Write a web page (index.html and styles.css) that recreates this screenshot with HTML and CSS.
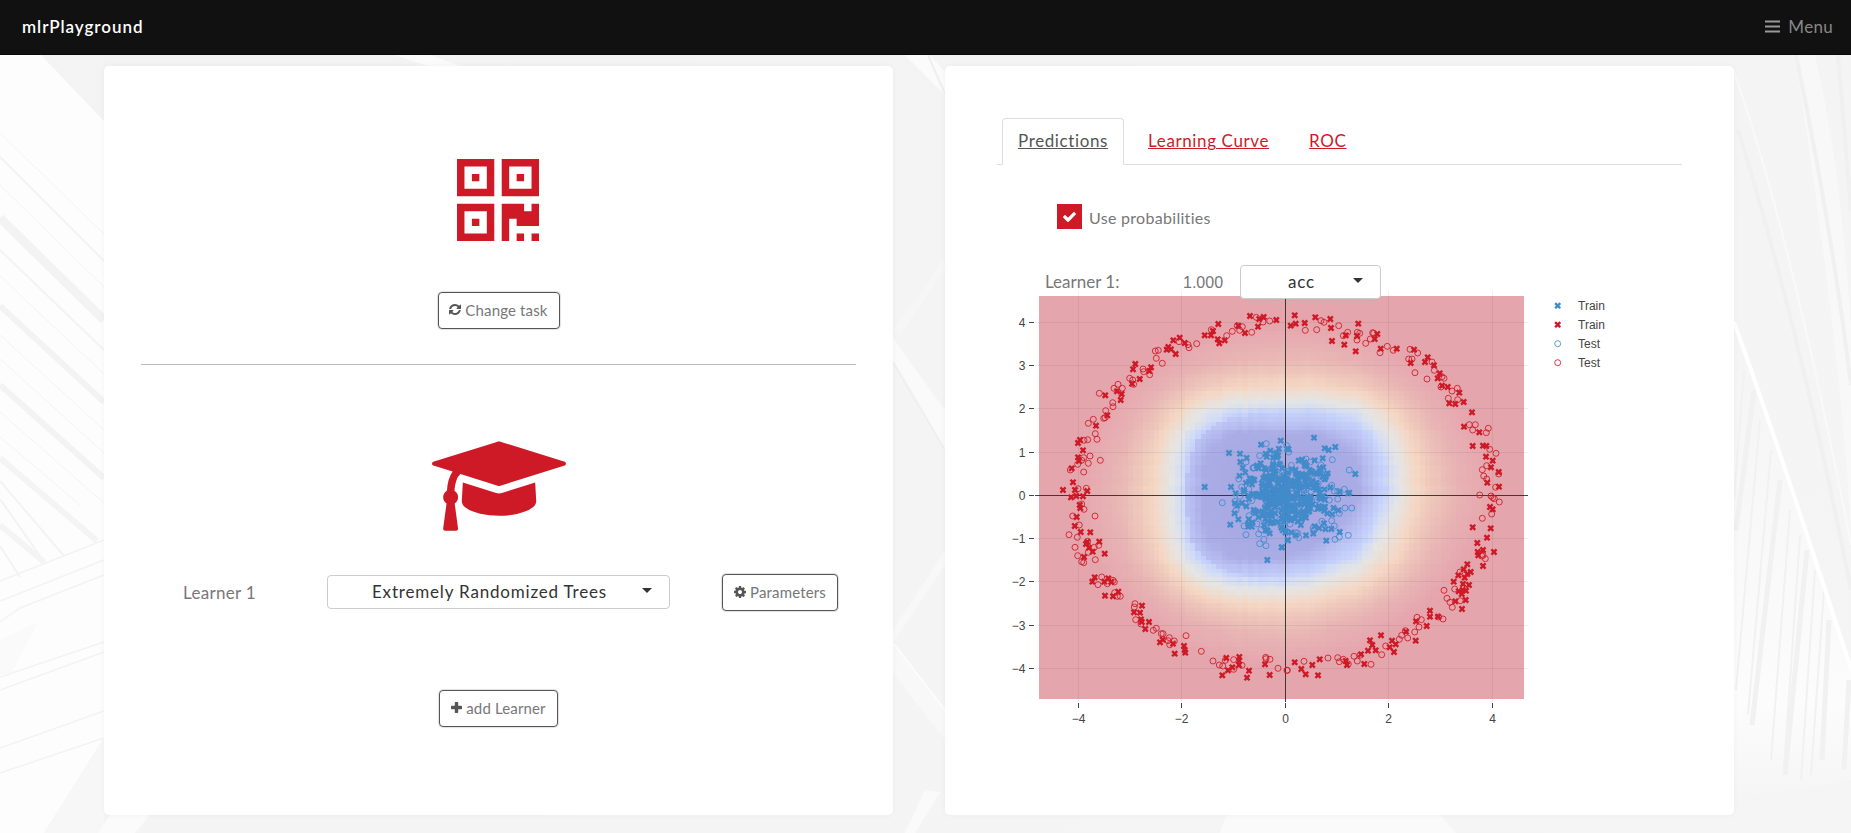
FILE: index.html
```html
<!DOCTYPE html>
<html lang="en">
<head>
<meta charset="utf-8">
<title>mlrPlayground</title>
<link rel="stylesheet" href="styles.css">
</head>
<body>
<svg class="backdrop" viewBox="0 0 1851 833" aria-hidden="true">
  <defs>
    <linearGradient id="wall" x1="0" x2="1" y1="0" y2="1">
      <stop offset="0" stop-color="#f3f3f3"/><stop offset="1" stop-color="#f5f5f5"/>
    </linearGradient>
    <linearGradient id="fade" x1="0" x2="0" y1="0" y2="1">
      <stop offset="0" stop-color="#f4f4f4"/><stop offset=".8" stop-color="#fcfcfc"/><stop offset="1" stop-color="#f5f5f5"/>
    </linearGradient>
  </defs>
  <rect width="1851" height="833" fill="url(#wall)"/>
  <path fill="#fdfdfd" d="M0 55H41L104 121V738L44 833H0Z"/>
  <g stroke="#f3f3f3" fill="none">
    <path stroke-width="1" d="M0 133L104 234M0 185L104 287M0 276L104 374M0 335L104 430M0 359L104 453M0 412L104 503M0 437L80 505"/>
    <path stroke-width="2" d="M0 157L104 261M0 250L104 350M0 481L64 556M0 499L45 563M0 546L20 577"/>
    <path stroke-width="9" d="M0 218L104 320"/>
    <path stroke-width="6" d="M0 306L104 402M0 385L104 478"/>
    <path stroke-width="6" stroke="#f4f4f4" d="M0 458L97 541M0 525L44 562"/>
    <path stroke-width="1.5" d="M0 581L104 540M0 601L104 560M20 608L104 575M0 622L20 608M0 677L104 642M0 690L104 652M0 748L104 711M0 773L104 738"/>
  </g>
  <path fill="#fafafa" d="M0 640L38 622L12 672L0 675Z"/>
  <path fill="#f7f7f7" d="M104 738V833H44Z"/>
  <path fill="#fbfbfb" d="M395 55L428 66H460L430 55ZM98 833L110 815H150L135 833ZM930 55L945 72V95L905 55Z"/>
  <path fill="#f6f6f6" d="M893 330L900 336L945 270V258Z"/>
  <path fill="#fafafa" d="M893 338L945 410V450L893 362Z"/>
  <path stroke="#efefef" stroke-width="2" d="M893 362L945 450M928 55L945 94"/>
  <path fill="#f8f8f8" d="M893 643L945 565V550L893 630ZM893 645L945 710V740L893 673Z"/>
  <path stroke="#fdfdfd" stroke-width="2" d="M893 643L945 710"/>
  <path fill="#fafafa" d="M905 833L925 790L940 792L915 833ZM1220 833L1226 815H1440L1456 833Z"/>
  <path fill="url(#fade)" d="M1734 325L1851 670V780L1734 800Z"/>
  <g stroke="#f1f1f1" fill="none">
    <path stroke-width="2" d="M1734 500L1744 370M1736 690L1760 420M1748 715L1771 450M1771 760L1790 510M1784 770L1800 535M1801 780L1815 570M1811 775L1824 590"/>
    <path stroke-width="5" d="M1736 530L1754 390M1752 725L1780 480M1785 775L1807 550M1822 760L1829 620M1844 770L1849 680"/>
  </g>
  <path fill="none" stroke="#fff" stroke-width="4" d="M1734 322Q1780 450 1852 672"/>
  <path fill="none" stroke="#f9f9f9" stroke-width="2" d="M1734 72Q1790 230 1851 545M1808 55Q1833 190 1851 340"/>
  <path fill="#f8f8f8" d="M1815 55Q1840 160 1851 330V540Q1845 380 1795 55Z"/>
  <path fill="none" stroke="#f0f0f0" stroke-width="4" d="M1738 130Q1800 330 1851 590M1796 55Q1832 230 1851 385M1838 55L1851 210"/>
</svg>

<header class="navbar">
  <span class="brand">mlrPlayground</span>
  <a class="menu"><svg viewBox="0 0 15 13"><path d="M0 0.5h15v2H0zM0 5.5h15v2H0zM0 10.5h15v2H0z"/></svg><span>Menu</span></a>
</header>

<main class="board">
  <section class="card setup">
    <svg class="qr" viewBox="0 0 11 11"><path fill-rule="evenodd" d="M0 0h5v5H0zM1 1v3h3V1zM2 2h1v1H2zM6 0h5v5H6zM7 1v3h3V1zM8 2h1v1H8zM0 6h5v5H0zM1 7v3h3V7zM2 8h1v1H2zM6 6h3v1h1V6h1v3H8V8H7v3H6zM8 10h1v1H8zM10 10h1v1h-1z"/></svg>
    <button class="btn btn-task"><svg viewBox="0 128 1536 1536"><path d="M1511 928q0 5-1 7-64 268-268 434.500t-478 166.500q-146 0-282.500-55t-243.500-157l-129 129q-19 19-45 19t-45-19-19-45v-448q0-26 19-45t45-19h448q26 0 45 19t19 45-19 45l-137 137q71 66 161 102t187 36q134 0 250-65t186-179q11-17 53-117 8-23 30-23h192q13 0 22.500 9.500t9.500 22.500zm25-672v448q0 26-19 45t-45 19h-448q-26 0-45-19t-19-45 19-45l138-138q-148-137-349-137-134 0-250 65t-186 179q-11 17-53 117-8 23-30 23h-199q-13 0-22.500-9.500t-9.500-22.500v-7q65-268 270-434.500t480-166.500q146 0 284 55.500t245 156.500l130-129q19-19 45-19t45 19 19 45z"/></svg><span>Change task</span></button>
    <hr class="divider">
    <svg class="cap" viewBox="0 128 2304 1536"><path d="M1774 836l18 316q4 69-82 128t-235 93.500t-323 34.500t-323-34.500t-235-93.500t-82-128l18-316l574 181q22 7 48 7t48-7zM2304 512q0 23-22 31l-1120 352q-4 1-10 1t-10-1l-652-206q-43 34-71 111.500t-34 178.500q63 36 63 109q0 69-58 107l58 433q2 14-8 25q-9 11-24 11h-192q-15 0-24-11q-10-11-8-25l58-433q-58-38-58-107q0-73 65-111q11-207 98-330l-333-104q-22-8-22-31t22-31l1120-352q4-1 10-1t10 1l1120 352q22 8 22 31z"/></svg>
    <div class="learner-row">
      <span class="learner-name">Learner 1</span>
      <div class="select select-learner"><span>Extremely Randomized Trees</span><i class="caret"></i></div>
      <button class="btn btn-param"><svg viewBox="0 128 1536 1536"><path d="M1024 896q0-106-75-181t-181-75-181 75-75 181 75 181 181 75 181-75 75-181zm512-109v222q0 12-8 23t-20 13l-185 28q-19 54-39 91 35 50 107 138 10 12 10 25t-9 23q-27 37-99 108t-94 71q-12 0-26-9l-138-108q-44 23-91 38-16 136-29 186-7 28-36 28h-222q-14 0-24.500-8.500t-11.500-21.500l-28-184q-49-16-90-37l-141 107q-10 9-25 9-14 0-25-11-126-114-165-168-7-10-7-23 0-12 8-23 15-21 51-66.500t54-70.500q-27-50-41-99l-183-27q-13-2-21-12.500t-8-23.500v-222q0-12 8-23t19-13l186-28q14-46 39-92-40-57-107-138-10-12-10-24 0-10 9-23 26-36 98.500-107.500t94.500-71.500q13 0 26 10l138 107q44-23 91-38 16-136 29-186 7-28 36-28h222q14 0 24.500 8.500t11.500 21.500l28 184q49 16 90 37l142-107q9-9 24-9 13 0 25 10 129 119 165 170 7 8 7 22 0 12-8 23-15 21-51 66.500t-54 70.500q26 50 41 98l183 28q13 2 21 12.500t8 23.500z"/></svg><span>Parameters</span></button>
    </div>
    <button class="btn btn-add"><svg viewBox="0 0 11 11"><path d="M4.600 0h1.800q.8 0 .8.800v3h3q.8 0 .8.800v1.800q0 .8-.8.800h-3v3q0 .8-.8.800H4.600q-.8 0-.8-.8v-3h-3Q0 7.200 0 6.400V4.600q0-.8.800-.8h3v-3q0-.8.8-.8z"/></svg><span>add Learner</span></button>
  </section>

  <section class="card results">
    <nav class="tabs">
      <a class="tab active"><span>Predictions</span></a>
      <a class="tab"><span>Learning Curve</span></a>
      <a class="tab"><span>ROC</span></a>
    </nav>
    <label class="check"><i class="box"><svg viewBox="120 200 1552 1320"><path d="M1671 566q0 40-28 68l-724 724-136 136q-28 28-68 28t-68-28l-136-136-362-362q-28-28-28-68t28-68l136-136q28-28 68-28t68 28l294 295 656-657q28-28 68-28t68 28l136 136q28 28 28 68z"/></svg></i><span>Use probabilities</span></label>
    <div class="measure">
      <span class="m-name">Learner 1:</span>
      <span class="m-value">1.000</span>
      <div class="select select-measure"><span>acc</span><i class="caret"></i></div>
    </div>
    <svg class="plot" viewBox="1010 285 640 450" id="plot"></svg>
  </section>
</main>
<script src="plot.js"></script>
</body>
</html>
```
FILE: styles.css
```css
* { box-sizing: border-box; }
body {
  margin: 0;
  height: 833px;
  overflow: hidden;
  font-family: "Lato", "Open Sans", sans-serif;
  font-size: 17px;
  font-variant-ligatures: none;
  color: #777;
  background: #f4f4f4;
}
.backdrop {
  position: absolute;
  inset: 0;
  z-index: -1;
  width: 1851px;
  height: 833px;
}
.navbar {
  display: flex;
  align-items: center;
  justify-content: space-between;
  height: 55px;
  padding: 0 18px 1px 22px;
  background: #111;
  border-bottom: 1px solid #090909;
}
.brand { color: #fff; font-weight: 600; letter-spacing: 0.95px; }
.menu { display: flex; align-items: center; color: #888; letter-spacing: 0.3px; }
.menu svg { width: 15px; height: 13px; margin-right: 8px; fill: #999; }
.board {
  display: flex;
  gap: 52px;
  padding: 11px 117px 0 104px;
}
.card {
  width: 789px;
  height: 749px;
  border-radius: 5px;
  background: #fff;
  box-shadow: 0 0 6px rgba(0, 0, 0, 0.04);
}
.setup {
  display: flex;
  flex-direction: column;
  align-items: center;
  padding: 93px 37px 0;
}
.qr { width: 82px; height: 82px; fill: #cd1a26; margin-left: -2px; }
.btn {
  display: flex;
  align-items: center;
  justify-content: center;
  gap: 4px;
  height: 37px;
  padding: 0 0 2px;
  border: 1px solid #555;
  border-radius: 4px;
  background: #fff;
  box-shadow: 0 0 1px 1px rgba(0, 0, 0, 0.12);
  color: #777;
  font-family: inherit;
  font-size: 15px;
}
.btn svg { width: 12px; height: 12px; fill: #555; }
.btn span { white-space: nowrap; letter-spacing: 0.15px; }
.btn-task { width: 122px; margin-top: 51px; }
.divider {
  width: 715px;
  height: 1px;
  margin: 35px 0 0;
  border: 0;
  background: #bbb;
}
.cap { width: 134px; height: 90px; margin-top: 76px; fill: #cd1a26; }
.learner-row {
  display: flex;
  align-items: center;
  width: 715px;
  height: 37px;
  margin-top: 43px;
}
.learner-name { width: 144px; margin: 0 0 1px 42px; letter-spacing: 0.3px; }
.select {
  display: flex;
  align-items: center;
  height: 34px;
  padding-bottom: 1px;
  border: 1px solid #ccc;
  border-radius: 4px;
  background: #fff;
  color: #333;
}
.select span { flex: 1; text-align: center; letter-spacing: 0.82px; }
.select-learner { width: 343px; margin-top: -1px; padding: 0 17px 1px 9px; }
.caret {
  border: 5px solid transparent;
  border-top-color: #333;
  border-bottom: 0;
  margin-bottom: 2px;
}
.btn-param { width: 116px; margin-left: 52px; }
.btn-add { width: 119px; margin-top: 79px; }
.btn-add svg { width: 11px; height: 11px; }

.results { padding: 52px 52px 0; }
.tabs {
  display: flex;
  height: 47px;
  padding-left: 5px;
  border-bottom: 1px solid #ddd;
}
.tab {
  display: flex;
  align-items: center;
  height: 47px;
  padding: 0 15px 2px;
  margin-right: 8px;
  border: 1px solid transparent;
  border-radius: 4px 4px 0 0;
  color: #cd1a26;
  text-decoration: underline;
  text-decoration-thickness: 1px;
  letter-spacing: 0.62px;
  white-space: nowrap;
}
.tab.active {
  border-color: #ddd;
  border-bottom-color: #fff;
  background: #fff;
  color: #555;
}
.check {
  display: flex;
  align-items: center;
  gap: 7px;
  height: 25px;
  margin: 39px 0 0 60px;
  font-size: 16px;
  letter-spacing: 0.3px;
}
.check span { padding-top: 1px; }
.box {
  display: flex;
  align-items: center;
  justify-content: center;
  width: 25px;
  height: 25px;
  background: #cd1a26;
}
.box svg { width: 13px; height: 11px; fill: #fff; }
.measure {
  display: flex;
  align-items: center;
  position: relative;
  z-index: 1;
  height: 34px;
  margin: 36px 0 0 48px;
}
.m-name { width: 138px; padding-bottom: 1px; }
.m-value { width: 57px; padding-top: 2px; font: 16px "Liberation Sans", Arial, sans-serif; }
.select-measure { width: 141px; padding: 0 17px 1px 9px; }
.plot {
  display: block;
  width: 640px;
  height: 450px;
  margin: -14px 0 0 13px;
  font: 12px "Liberation Sans", Arial, sans-serif;
}
```
FILE: plot.js
```js
const X0 = 1285.4, Y0 = 495.4, UX = 51.75, UY = 43.25;
const RED = '#cd1a26', BLUE = '#428bca';
const out = [];

let seed = 11;
function rnd() {
  seed = (seed * 1664525 + 1013904223) % 4294967296;
  return seed / 4294967296;
}
function gauss() {
  return Math.sqrt(-2 * Math.log(1 - rnd())) * Math.cos(2 * Math.PI * rnd());
}

// Probability surface: colour by distance on a rounded-square metric.
const stops = [
  [0, 165, 165, 224], [1.4, 170, 172, 230], [1.65, 185, 192, 242], [1.9, 197, 209, 251], [2.02, 212, 221, 244],
  [2.2, 229, 229, 228], [2.55, 245, 215, 196], [2.85, 238, 199, 187],
  [3.3, 232, 180, 180], [4, 229, 165, 173], [20, 229, 165, 173]
];
function shade(r) {
  let i = 1;
  while (stops[i][0] < r) i++;
  const a = stops[i - 1], b = stops[i], t = (r - a[0]) / (b[0] - a[0]);
  return 'rgb(' + [1, 2, 3].map(k => Math.round(a[k] + (b[k] - a[k]) * t)).join() + ')';
}
function distance(x, y) {
  const ax = Math.abs(x), ay = Math.abs(y);
  const inner = Math.cbrt(ax ** 3 + ay ** 3);
  const outer = Math.hypot(ax, ay);
  const t = Math.min(1, Math.max(0, (inner - 2.3) / 0.9));
  let r = inner + (outer - inner) * t;
  if (x > 0 && y < 0) r += 0.28 * (2 * ax * ay) / (ax * ax + ay * ay);
  if (x < 0 && r < 1.9) r -= 0.18 * Math.min(1, ax / 1.6);
  return r;
}
const N = 93, L = 1039, T = 296, W = 485 / N, H = 402.5 / N;
const nx = [], ny = [];
for (let i = 0; i < N; i++) { nx.push((rnd() - 0.5) * 0.07); ny.push((rnd() - 0.5) * 0.07); }
out.push('<g shape-rendering="crispEdges">');
for (let j = 0; j < N; j++) {
  for (let i = 0; i < N; i++) {
    const px = L + i * W, py = T + j * H;
    const r = distance((px + W / 2 - X0) / UX, (Y0 - py - H / 2) / UY) + nx[i] + ny[j];
    out.push(`<rect x="${px.toFixed(2)}" y="${py.toFixed(2)}" width="${(W + 0.1).toFixed(2)}" height="${(H + 0.1).toFixed(2)}" fill="${shade(Math.max(0, r))}"/>`);
  }
}
out.push('</g>');

// Grid, zero lines, ticks and labels.
for (const v of [-4, -2, 2, 4]) {
  const x = Math.round(X0 + v * UX - 0.5) + 0.5;
  out.push(`<path d="M${x} 291V702" stroke="#444" stroke-opacity=".09"/>`);
}
for (const v of [-4, -3, -2, -1, 1, 2, 3, 4]) {
  const y = Math.round(Y0 - v * UY - 0.5) + 0.5;
  out.push(`<path d="M1035 ${y}H1528" stroke="#444" stroke-opacity=".09"/>`);
}
const label = v => String(v).replace('-', '\u2212');
for (let v = -4; v <= 4; v++) {
  const y = Math.round(Y0 - v * UY - 0.5) + 0.5;
  out.push(`<path d="M1029 ${y}h5" stroke="#444"/><text x="1025.500" y="${y + 4.5}" text-anchor="end" fill="#444">${label(v)}</text>`);
}
for (let v = -4; v <= 4; v += 2) {
  const x = Math.round(X0 + v * UX - 0.5) + 0.5;
  out.push(`<path d="M${x} 703v5" stroke="#444"/><text x="${x}" y="723" text-anchor="middle" fill="#444">${label(v)}</text>`);
}
out.push('<path d="M1035 495.500H1528M1285.500 291V702" stroke="#222" stroke-opacity=".85"/>');

function cross(x, y, c) {
  out.push(`<path fill="${c}" d="M${x.toFixed(1)} ${(y + 1.7).toFixed(1)}l1.700 1.700 1.700-1.700-1.700-1.700 1.700-1.700-1.700-1.700-1.700 1.700-1.700-1.700-1.700 1.700 1.700 1.700-1.700 1.700 1.700 1.700z"/>`);
}
function ring(x, y, c) {
  out.push(`<circle cx="${x.toFixed(1)}" cy="${y.toFixed(1)}" r="3" fill="none" stroke="${c}" stroke-opacity=".85"/>`);
}

// Samples by quadrant, in thirds of a pixel from each quadrant's origin.
const samples = [
  [1010, 280, RED, cross, '720,108 748,117 761,111 799,120 744,140 625,132 685,137 705,159 609,153 603,166 584,166 623,178 644,181 628,190 509,173 490,181 524,189 475,201 470,209 483,208 497,222 376,252 369,268 423,262 418,273 389,297 366,311 286,346 321,334 335,342 332,360 292,406 258,437 210,480 204,489 219,511 204,532 207,543 185,565 189,607 159,630 195,630 232,633 219,649 199,648 183,652'],
  [1010, 280, RED, ring, '739,112 759,126 779,123 725,157 697,140 682,137 689,151 667,154 650,167 604,149 560,191 534,194 537,203 507,185 445,211 436,213 439,235 457,250 399,267 401,275 419,284 359,295 368,300 371,313 324,313 312,325 337,325 268,340 308,368 309,380 287,392 281,415 285,413 250,418 235,430 256,461 261,478 233,479 222,481 240,528 221,533 215,541 235,550 271,541 203,553 181,570 221,576 204,626 229,625'],
  [1280, 280, RED, cross, '44,106 32,137 47,131 74,129 106,112 151,117 153,144 156,183 235,131 197,166 231,168 193,194 227,214 292,162 284,177 302,206 350,206 402,209 392,249 443,232 435,246 462,256 479,280 473,295 486,317 503,321 538,338 508,370 526,372 551,366 576,397 552,440 598,457 578,498 609,497 619,498 618,530 638,542 633,562 656,576 622,608 657,620'],
  [1280, 280, RED, ring, '76,151 110,149 123,122 132,127 176,137 190,167 203,157 232,157 239,160 231,180 257,190 278,158 271,177 281,160 300,218 322,199 340,211 390,208 413,219 386,237 396,237 405,278 441,297 456,246 463,271 492,295 486,290 483,321 516,333 532,325 533,359 505,355 568,434 586,434 578,450 625,445 619,458 629,508 648,520 620,557 607,569 611,588 620,597 656,582 647,622'],
  [1010, 490, RED, cross, '209,45 211,54 200,81 194,108 212,126 241,127 232,156 228,162 268,155 237,173 248,185 284,191 222,201 254,262 247,275 283,275 295,265 304,276 325,305 285,317 309,319 396,347 372,367 390,368 393,388 395,396 417,396 406,417 450,457 458,449 489,461 494,491 522,468 524,480 526,488 649,504 688,501 687,512 687,525 667,532 654,541 637,556 717,542 711,563 765,523 779,555'],
  [1010, 490, RED, ring, '215,42 222,58 188,78 255,78 208,105 177,134 202,142 195,172 233,154 266,166 253,172 235,187 203,197 256,209 221,218 215,215 275,261 309,271 313,276 264,284 292,281 314,308 331,319 322,319 375,341 373,351 377,389 393,402 430,421 439,415 454,431 459,431 478,443 474,452 493,453 479,464 528,437 574,484 609,513 628,525 638,528 646,511 671,509 671,538 696,526 767,502 768,506 780,508 804,535 831,541'],
  [1280, 490, RED, cross, '630,51 638,58 578,112 632,115 621,143 592,159 609,180 593,186 595,196 642,186 609,228 562,223 551,238 572,246 562,252 535,256 554,263 521,275 549,282 567,285 558,302 548,300 536,304 545,312 557,330 526,334 546,357 450,362 450,380 474,380 408,394 440,408 378,425 303,436 270,451 277,465 264,482 287,481 336,452 347,463 329,472 342,486 407,452 243,493 197,513 201,525 253,522 119,508 97,525 44,517 64,537 77,553 114,556'],
  [1280, 490, RED, ring, '599,15 633,18 643,26 638,23 658,36 635,72 607,85 605,198 616,206 609,196 540,246 492,301 524,297 501,325 541,332 510,337 517,352 489,387 476,381 411,382 424,389 417,411 404,426 376,422 365,436 383,444 358,448 317,468 305,494 273,523 240,496 222,499 232,513 205,522 190,508 173,503 178,515 144,504 72,514 22,541'],
  [1010, 280, BLUE, cross, '812,482 753,494 657,519 690,521 710,534 691,546 698,563 770,530 801,532 752,550 746,565 584,621 663,621 733,600 765,590 677,640'],
  [1010, 280, BLUE, ring, '769,491 749,527 708,546 732,564 792,558 686,597 695,621 830,497'],
  [1280, 280, BLUE, cross, '102,473 134,505 146,510 166,501 104,541 128,535 56,542 226,582 208,638 110,580 122,578 128,590 134,598'],
  [1280, 280, BLUE, ring, '157,539 123,555 208,570 26,516 78,537 91,546 155,616 193,628 173,634'],
  [1010, 490, BLUE, cross, '661,104 715,110 725,110 779,130 773,122 772,210 816,172 833,150 675,40'],
  [1010, 490, BLUE, ring, '637,38 708,134 702,108 762,148 749,161 768,167 678,61 717,77 725,32'],
  [1280, 490, BLUE, cross, '205,10 175,61 179,126 139,152 24,151 78,136 154,117 132,100 142,70 135,50 5,172'],
  [1280, 490, BLUE, ring, '215,54 195,54 205,136 178,141 165,148 49,128 56,143 155,92 178,70 173,27 163,108 13,108']
];
for (const [ox, oy, color, mark, list] of samples) {
  for (const p of list.split(' ')) {
    const [a, b] = p.split(',').map(Number);
    mark(ox + a / 3, oy + b / 3, color);
  }
}

// Dense inner class.
for (let n = 0; n < 400; n++) {
  const x = gauss() * 0.45 + 0.03, y = gauss() * 0.42 + 0.02;
  if (Math.hypot(x, y) > 1.1) continue;
  (n % 4 ? cross : ring)(X0 + x * UX, Y0 - y * UY, BLUE);
}

// Legend.
[['Train', BLUE, cross], ['Train', RED, cross], ['Test', BLUE, ring], ['Test', RED, ring]].forEach(([t, c, mark], i) => {
  const y = 305.7 + i * 19;
  mark(1557.7, y, c);
  out.push(`<text x="1578" y="${y + 4.3}" fill="#444">${t}</text>`);
});
document.getElementById('plot').innerHTML = out.join('');
```
